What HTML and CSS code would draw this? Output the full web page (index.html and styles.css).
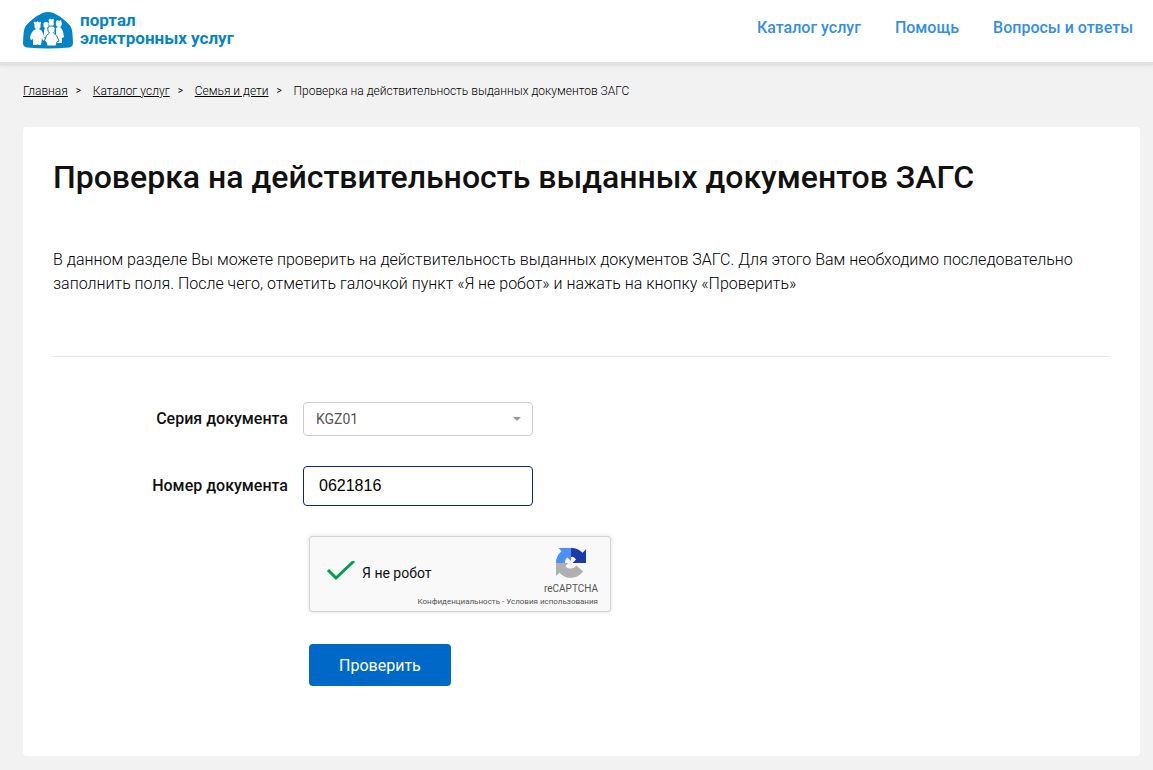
FILE: index.html
```html
<!DOCTYPE html>
<html lang="ru">
<head>
	<meta charset="utf-8">
	<title>Проверка на действительность выданных документов ЗАГС</title>
	<link rel="stylesheet" href="styles.css">
</head>
<body>
	<header class="header">
		<a href="#" class="logo">
			<svg class="logo-icon" width="50" height="37" viewBox="0 0 50 37">
				<path fill="#0484c6" d="M19 1.200Q25-1 31 1.200Q40 5.500 47 13.500Q49 16 49.500 22L50 31Q50 35 46 35.400Q25 37.600 4 35.400Q0 35 0 31L.5 22Q1 16 3 13.500Q10 5.500 19 1.200Z"/>
				<g fill="#fff">
					<path d="M25.500 8L27 6.500L28.500 7.500L30 6.500L31 8L30.500 10Q31.500 13 29.500 14L32 17V25H25V17L27 14Q25 13 26 10Z"/>
					<path d="M33 10L34 8L36 9L38 8L38.500 10Q39.500 14 37 15Q40 17 41 25L39 26V31H34L33 22L33 16L35 15Q32 14 33 10Z"/>
					<path d="M20.500 13Q20 10 23 10Q26 10 25.500 13Q26 15 24 16L26 19V25H21V18L22 16Q20 15 20.500 13Z"/>
					<path d="M10.500 10.500L12 9.500L13 10.500L14.500 9L16 10.500L18 9.500L18 11.500L17.500 12.500Q18 16 16 17Q20 18 22 28L20 28.500L19 26L18 33H15L14.500 32L13.500 33H10V27L8 28L7 26Q8 19 13 17Q11 16 11.500 12.500Z"/>
				</g>
				<path fill="#fff" stroke="#0484c6" d="M25 18Q24 14 28.500 14Q33 14 32 18Q32 20 30.500 21Q34 22 36 29L34 30L33 34H24L23 30L21.500 29Q23 22 26.500 21Q25 20 25 18Z"/>
			</svg>
			<span>портал<br>электронных услуг</span>
		</a>
		<nav class="menu">
			<a href="#">Каталог услуг</a>
			<a href="#">Помощь</a>
			<a href="#">Вопросы и ответы</a>
		</nav>
	</header>

	<div class="breadcrumbs">
		<a href="#">Главная</a>
		<span class="sep">&gt;</span>
		<a href="#">Каталог услуг</a>
		<span class="sep">&gt;</span>
		<a href="#">Семья и дети</a>
		<span class="sep">&gt;</span>
		<span>Проверка на действительность выданных документов ЗАГС</span>
	</div>

	<main class="content">
		<h1>Проверка на действительность выданных документов ЗАГС</h1>
		<p class="intro">В данном разделе Вы можете проверить на действительность выданных документов ЗАГС. Для этого Вам необходимо последовательно заполнить поля. После чего, отметить галочкой пункт «Я не робот» и нажать на кнопку «Проверить»</p>
		<hr>
		<form class="form">
			<div class="row">
				<label for="series">Серия документа</label>
				<div class="select">
					<select id="series" name="series">
						<option selected>KGZ01</option>
					</select>
				</div>
			</div>
			<div class="row">
				<label for="number">Номер документа</label>
				<input type="text" class="number" id="number" name="number" value="0621816">
			</div>
			<div class="actions">
				<div class="captcha">
					<label class="captcha-check">
						<input type="checkbox" checked>
						<svg width="30" height="24" viewBox="0 0 30 24">
							<path d="M2 9L10 17L28 0" fill="none" stroke="#009e55" stroke-width="3"/>
						</svg>
						<span>Я не робот</span>
					</label>
					<div class="captcha-brand">
						<svg width="32" height="32" viewBox="0 0 64 64">
							<path fill="#1c3aa9" d="M62 32V4.500L55 11.500A30 30 0 0 0 32 2V20Q38 18 42 25L35 32Z"/>
							<path fill="#4a90f5" d="M32 2H7L13 8.500A30 30 0 0 0 2 32H20Q19 25 25 21L32 28Z"/>
							<path fill="#b0b0b0" d="M2 32V58L9 51.500A30 30 0 0 0 56 49L43 37Q36 46 25 42Q21 39 21 38L27 32Z"/>
						</svg>
						<span>reCAPTCHA</span>
					</div>
					<div class="captcha-links">
						<a href="#">Конфиденциальность</a> - <a href="#">Условия использования</a>
					</div>
				</div>
				<button type="submit">Проверить</button>
			</div>
		</form>
	</main>
</body>
</html>
```

FILE: styles.css
```css
*{
	box-sizing: border-box;
}

body{
	margin: 0;
	background-color: #f2f2f2;
	color: #111;
	font-family: Roboto, sans-serif;
	font-size: 16px;
	line-height: 24px;
}

a{
	color: inherit;
}

.header{
	display: flex;
	justify-content: space-between;
	height: 62px;
	padding: 0 20px 0 23px;
	background-color: #fff;
	box-shadow: 0 3px 0 #e1e1e1, 0 4px 4px #ddd;
}

.logo{
	display: flex;
	gap: 7px;
	padding-top: 12px;
	color: #0484c6;
	font-size: 17px;
	font-weight: bold;
	line-height: 18px;
	text-decoration: none;
}

.logo span{
	margin-top: -1px;
}

.menu{
	display: flex;
	gap: 34px;
	padding-top: 16px;
	color: #338fe5;
	font-weight: 500;
}

.menu a{
	text-decoration: none;
}

.breadcrumbs{
	display: flex;
	gap: 8px;
	padding: 20px 23px;
	color: #000;
	font-size: 12px;
	font-weight: 300;
	line-height: 18px;
}

.sep{
	width: 9px;
	font-size: 10px;
	font-weight: 400;
}

.content{
	margin: 7px 13px 14px 23px;
	padding: 30px 30px 70px;
	background-color: #fff;
	border-radius: 4px;
}

h1{
	margin: 0 0 51px;
	font-size: 32px;
	font-weight: 500;
	line-height: 40px;
}

.intro{
	margin: 0;
	color: #000;
	font-weight: 300;
}

hr{
	margin: 60px 0 45px;
	border: 0;
	border-top: 1px solid #e5e5e5;
}

.row{
	display: flex;
	align-items: center;
	margin-bottom: 30px;
}

.row label{
	width: 235px;
	margin-right: 15px;
	font-weight: 500;
	text-align: right;
}

.select{
	position: relative;
	width: 230px;
}

/* стрелка списка */
.select::after{
	content: "";
	position: absolute;
	top: 15px;
	right: 12px;
	border: 4px solid transparent;
	border-top-color: #999;
	border-bottom: 0;
	pointer-events: none;
}

select{
	display: block;
	width: 100%;
	height: 34px;
	padding: 0 12px;
	appearance: none;
	background-color: #fff;
	border: 1px solid #ccc;
	border-radius: 4px;
	color: #555;
	font-family: inherit;
	font-size: 14px;
}

.number{
	width: 230px;
	height: 40px;
	padding: 0 15px;
	border: 1px solid #0b2a7a;
	border-radius: 4px;
	font-family: "Liberation Sans", Arial, sans-serif;
	font-size: 16px;
}

.actions{
	padding-left: 256px;
}

.captcha{
	display: grid;
	grid-template-columns: 1fr auto;
	align-content: start;
	width: 302px;
	height: 76px;
	margin-bottom: 32px;
	padding: 10px 12px 0 16px;
	background-color: #f9f9f9;
	border: 1px solid #d3d3d3;
	border-radius: 3px;
	box-shadow: 0 0 4px 1px rgba(0,0,0,0.08);
}

.captcha-check{
	display: flex;
	align-items: center;
	gap: 6px;
	font-size: 14px;
}

.captcha-check input{
	position: absolute;
	opacity: 0;
}

.captcha-brand{
	display: flex;
	flex-direction: column;
	align-items: center;
	color: #555;
	font-size: 10px;
	line-height: 20px;
}

.captcha-links{
	grid-column: 1 / 3;
	color: #555;
	font-size: 8px;
	line-height: 6px;
	text-align: right;
}

.captcha-links a{
	text-decoration: none;
}

button{
	height: 42px;
	padding: 0 30px;
	background-color: #0069c8;
	border: 0;
	border-radius: 4px;
	color: #fff;
	font-family: inherit;
	font-size: 16px;
}
```
